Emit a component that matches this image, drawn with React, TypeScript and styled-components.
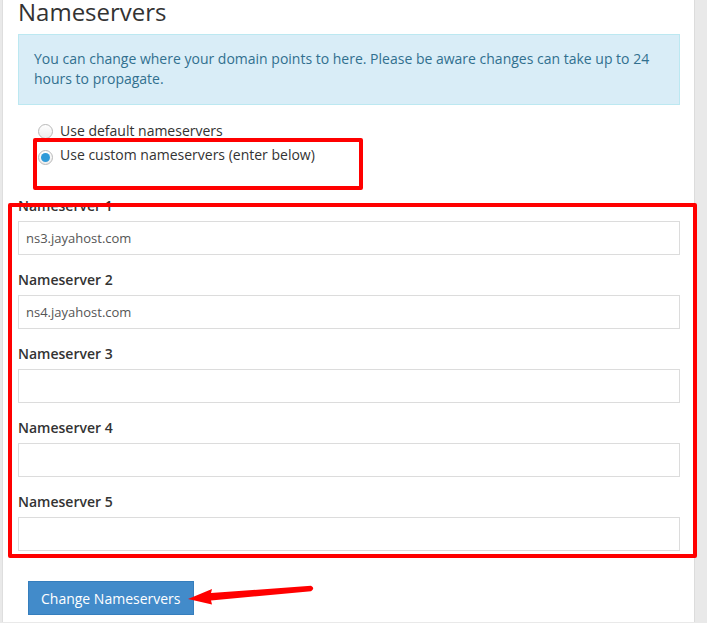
import React from "react";
import styled, { createGlobalStyle } from "styled-components";

const Global = createGlobalStyle`
  html, body { margin: 0; padding: 0; }
  body {
    background: #e9e9e9;
    font-family: "Open Sans", "Liberation Sans", sans-serif;
    color: #333;
    font-size: 14px;
    line-height: 20px;
    overflow: hidden;
  }
`;

const Panel = styled.div`
  position: relative;
  box-sizing: border-box;
  width: 693px;
  min-height: 623px;
  margin-left: 2px;
  background: #fff;
  border-left: 1px solid #dedede;
  border-right: 1px solid #dcdcdc;
  padding: 0 14px 0 15px;
`;

const Title = styled.h2`
  margin: -1px 0 0;
  font-size: 24px;
  line-height: 26px;
  font-weight: 400;
  color: #333;
`;

const Alert = styled.div`
  margin-top: 9px;
  background: #d9edf7;
  border: 1px solid #bce8f1;
  color: #31708f;
  padding: 14px 15px 15px;
`;

const RadioGroup = styled.div`
  display: flex;
  flex-direction: column;
  gap: 4px;
  margin: 16px 0 0 20px;
`;

const RadioRow = styled.label`
  display: flex;
  align-items: center;
  gap: 7px;
  color: #333;
`;

const RadioMark = styled.span<{ $checked?: boolean }>`
  box-sizing: border-box;
  width: 15px;
  height: 15px;
  border-radius: 50%;
  border: 1px solid #b9b9b9;
  background: linear-gradient(#ffffff, #ececec);
  display: flex;
  align-items: center;
  justify-content: center;
  margin-top: ${(p) => (p.$checked ? "4px" : "0")};
  &::after {
    content: "";
    display: ${(p) => (p.$checked ? "block" : "none")};
    width: 9px;
    height: 9px;
    border-radius: 50%;
    background: #2f9ad8;
  }
`;

const Fields = styled.div`
  margin-top: 31px;
  display: flex;
  flex-direction: column;
  gap: 15px;
`;

const Group = styled.div`
  display: flex;
  flex-direction: column;
  gap: 5px;
`;

const Label = styled.label`
  font-weight: 600;
  color: #333;
`;

const Input = styled.input`
  box-sizing: border-box;
  height: 34px;
  width: 100%;
  border: 1px solid #dcdcdc;
  border-radius: 0;
  padding: 0 7px;
  font-family: "Open Sans", "Liberation Sans", sans-serif;
  font-size: 13px;
  color: #555;
  background: #fff;
  outline: none;
`;

const Button = styled.button`
  margin: 30px 0 0 10px;
  height: 34px;
  padding: 0 12px;
  background: #428bca;
  border: 1px solid #357ebd;
  border-radius: 0;
  color: #fff;
  font-family: "Open Sans", "Liberation Sans", sans-serif;
  font-size: 14px;
  cursor: pointer;
`;

const Annotation = styled.div<{ $l: number; $t: number; $w: number; $h: number }>`
  position: absolute;
  box-sizing: border-box;
  left: ${(p) => p.$l}px;
  top: ${(p) => p.$t}px;
  width: ${(p) => p.$w}px;
  height: ${(p) => p.$h}px;
  border: 4px solid #ff0000;
  border-radius: 2px;
  pointer-events: none;
`;

const ArrowSvg = styled.svg`
  position: absolute;
  left: 182px;
  top: 580px;
  pointer-events: none;
`;

const servers = ["ns3.jayahost.com", "ns4.jayahost.com", "", "", ""];

export default function App() {
  return (
    <>
      <Global />
      <Panel>
        <Title>Nameservers</Title>
        <Alert>
          You can change where your domain points to here. Please be aware changes can take up to 24 hours to
          propagate.
        </Alert>
        <RadioGroup>
          <RadioRow>
            <RadioMark />
            Use default nameservers
          </RadioRow>
          <RadioRow>
            <RadioMark $checked />
            Use custom nameservers (enter below)
          </RadioRow>
        </RadioGroup>
        <Fields>
          {servers.map((v, i) => (
            <Group key={i}>
              <Label>Nameserver {i + 1}</Label>
              <Input defaultValue={v} />
            </Group>
          ))}
        </Fields>
        <Button>Change Nameservers</Button>

        <Annotation $l={30} $t={139} $w={330} $h={52} />
        <Annotation $l={5} $t={204} $w={689} $h={355} />
        <ArrowSvg width="135" height="30" viewBox="0 0 135 30">
          <path
            d="M3,20 L27,10 L26,14 L126,6.8 Q130.5,9.2 126,12.2 L26,21.5 L27,25.5 Z"
            fill="#ff0000"
          />
        </ArrowSvg>
      </Panel>
    </>
  );
}
